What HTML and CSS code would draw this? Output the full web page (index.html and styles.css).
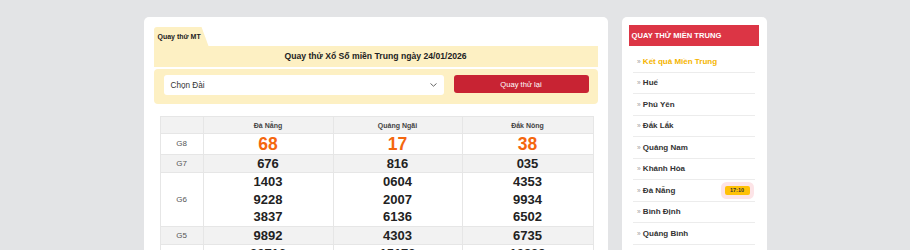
FILE: index.html
```html
<!DOCTYPE html>
<html lang="vi">
<head>
<meta charset="utf-8">
<title>Quay thử Xổ Số miền Trung</title>
<link rel="stylesheet" href="styles.css">
</head>
<body>
<div class="wrap">
  <main class="card main">
    <div class="tab">Quay thử MT</div>
    <div class="title-bar">Quay thử Xổ Số miền Trung ngày 24/01/2026</div>
    <div class="controls">
      <div class="select">
        <span>Chọn Đài</span>
        <svg class="chev" width="7" height="4" viewBox="0 0 7 4"><path d="M0.5 0.5 L3.5 3.2 L6.5 0.5" fill="none" stroke="#555" stroke-width="0.9"/></svg>
      </div>
      <button class="btn">Quay thử lại</button>
    </div>
    <table class="results">
      <colgroup><col class="c0"><col class="c1"><col class="c2"><col class="c3"></colgroup>
      <tr class="head"><th></th><th>Đà Nẵng</th><th>Quảng Ngãi</th><th>Đắk Nông</th></tr>
      <tr class="g8"><td class="lbl">G8</td><td>68</td><td>17</td><td>38</td></tr>
      <tr class="alt"><td class="lbl">G7</td><td>676</td><td>816</td><td>035</td></tr>
      <tr class="multi"><td class="lbl">G6</td>
        <td><div>1403</div><div>9228</div><div>3837</div></td>
        <td><div>0604</div><div>2007</div><div>6136</div></td>
        <td><div>4353</div><div>9934</div><div>6502</div></td></tr>
      <tr class="alt"><td class="lbl">G5</td><td>9892</td><td>4303</td><td>6735</td></tr>
      <tr class="multi"><td class="lbl">G4</td>
        <td><div>30716</div><div>81254</div><div>07431</div></td>
        <td><div>15172</div><div>62908</div><div>44017</div></td>
        <td><div>10939</div><div>27561</div><div>58320</div></td></tr>
    </table>
  </main>
  <aside class="card side">
    <div class="side-head">Quay thử miền Trung</div>
    <ul class="menu">
      <li class="active"><span class="raq">»</span> Kết quả Miền Trung</li>
      <li><span class="raq">»</span> Huế</li>
      <li><span class="raq">»</span> Phú Yên</li>
      <li><span class="raq">»</span> Đắk Lắk</li>
      <li><span class="raq">»</span> Quảng Nam</li>
      <li><span class="raq">»</span> Khánh Hòa</li>
      <li><span class="raq">»</span> Đà Nẵng <span class="badge">17:10</span></li>
      <li><span class="raq">»</span> Bình Định</li>
      <li><span class="raq">»</span> Quảng Bình</li>
      <li><span class="raq">»</span> Quảng Trị</li>
    </ul>
  </aside>
</div>
</body>
</html>
```

FILE: styles.css
```css
* { box-sizing: border-box; }
html, body { margin: 0; padding: 0; }
body {
  background: #e3e4e6;
  font-family: "Liberation Sans", Arial, Helvetica, sans-serif;
  color: #222;
}
.wrap {
  width: 623px;
  margin: 17px auto 0;
  display: flex;
  gap: 14px;
  align-items: flex-start;
}
.card {
  background: #fff;
  border-radius: 5px;
}
.main {
  width: 464px;
  padding: 10px 10px 20px;
}
.tab {
  width: 55px;
  height: 19px;
  background: #fdf0c3;
  font-size: 7px;
  font-weight: bold;
  line-height: 19px;
  padding-left: 4px;
  color: #222;
  border-top-left-radius: 3px;
  clip-path: polygon(0 0, 48px 0, 100% 100%, 0 100%);
}
.title-bar {
  height: 21px;
  background: #fdf0c3;
  text-align: center;
  font-size: 8.65px;
  font-weight: bold;
  line-height: 20px;
  color: #222;
}
.controls {
  margin-top: 2px;
  height: 35px;
  background: #fdf0c3;
  border-radius: 4px;
  padding: 6px 9px 0 10px;
  display: flex;
  gap: 10px;
  align-items: flex-start;
}
.select {
  width: 280px;
  height: 20px;
  background: #fff;
  border-radius: 3px;
  padding: 0 7px;
  display: flex;
  align-items: center;
  justify-content: space-between;
  font-size: 8.2px;
  color: #333;
}
.chev { margin-right: 0; }
.btn {
  width: 135px;
  height: 18px;
  border: 0;
  border-radius: 3px;
  background: #c82333;
  color: #fff;
  font-family: inherit;
  font-size: 7.6px;
  padding: 0;
  margin: 0;
}
.results {
  margin: 12px 0 0 6px;
  width: 433px;
  border-collapse: collapse;
  table-layout: fixed;
}
.c0 { width: 43px; }
.c1 { width: 130px; }
.c2 { width: 129px; }
.c3 { width: 131px; }
.results th, .results td {
  border: 1px solid #e6e6e6;
  padding: 0;
  text-align: center;
}
.head th {
  background: #f2f2f2;
  height: 17px;
  font-size: 7px;
  font-weight: bold;
  color: #444;
  line-height: 15px;
}
.results td {
  font-size: 13px;
  font-weight: bold;
  color: #222;
  line-height: 17px;
}
.results td.lbl {
  font-size: 8px;
  font-weight: normal;
  color: #555;
}
.g8 td {
  height: 21px;
  line-height: 20px;
  font-size: 17.5px;
  color: #f4670f;
}
.alt td { background: #f2f2f2; }
.multi td div { line-height: 17.7px; }
.side {
  width: 145px;
  padding: 8px 8px 20px 7px;
}
.side-head {
  height: 21px;
  background: #dc3545;
  color: #fff;
  font-size: 7.6px;
  font-weight: bold;
  text-transform: uppercase;
  line-height: 21px;
  padding-left: 3px;
}
.menu {
  list-style: none;
  margin: 5px 4px 0 4px;
  padding: 0;
}
.menu li {
  height: 21.5px;
  border-bottom: 1px solid #ececec;
  display: flex;
  align-items: center;
  padding-left: 4.5px;
  font-size: 8px;
  font-weight: bold;
  color: #333;
  white-space: pre;
}
.menu li.active { color: #f5b400; }
.raq {
  color: #999;
  font-weight: normal;
  font-size: 6.5px;
}
.badge {
  margin-left: auto;
  margin-right: 5px;
  width: 25px;
  height: 9px;
  background: #ffc107;
  border-radius: 2px;
  font-size: 5.5px;
  font-weight: bold;
  line-height: 9px;
  text-align: center;
  color: #333;
  box-shadow: 0 0 0 4px #fde4e7;
}
```
